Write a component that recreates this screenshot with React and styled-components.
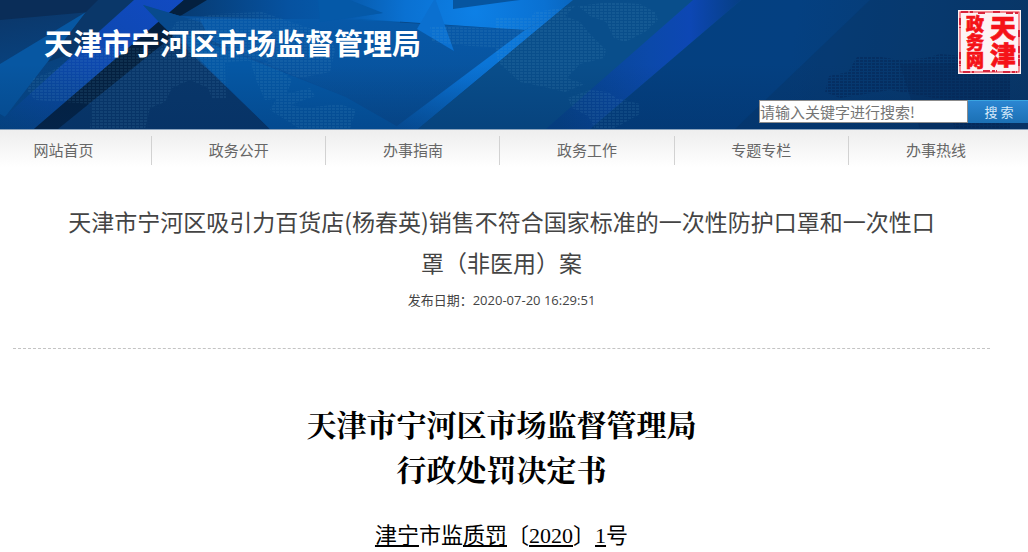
import React from 'react';
import styled, { createGlobalStyle, css } from 'styled-components';

const GlobalStyle = createGlobalStyle`
    * {
        box-sizing: border-box;
    }
    body {
        margin: 0;
        background: #fff;
        color: #444;
        font-family: 'Open Sans', 'Noto Sans CJK SC', sans-serif;
    }
`;

const Header = styled.header`
    position: relative;
    display: flex;
    justify-content: space-between;
    overflow: hidden;
    background: #064a8c;
`;

const BannerArt = styled.svg`
    position: absolute;
    inset: 0;
    width: 100%;
    height: 100%;
`;

const SiteName = styled.h1`
    position: relative;
    margin: 0;
    padding: 20px 0 0 44px;
    color: #fff;
    font: bold 29px/44px 'Noto Sans CJK SC', sans-serif;
`;

const HeaderSide = styled.div`
    position: relative;
    display: flex;
    flex-direction: column;
    align-items: flex-end;
    gap: 26px;
    padding: 10px 0 6px;
`;

const SealLink = styled.a`
    display: block;
    height: 64px;
    margin-right: 7px;
`;

const SearchForm = styled.form`
    display: flex;
    height: 23px;
`;

const SearchInput = styled.input`
    width: 209px;
    padding: 0;
    border: 1px solid #8c8c8c;
    border-radius: 0;
    background: #fff;
    outline: none;
    font: 15px/21px 'Noto Sans CJK SC', sans-serif;
    &::placeholder {
        color: #757575;
        opacity: 1;
    }
`;

const SearchButton = styled.button`
    width: 60px;
    padding: 0 0 0 2px;
    border: 0;
    border-top: 1px solid #3aa5e0;
    background: linear-gradient(#2c86d2, #1b70b4);
    color: #d5e9fa;
    font: 13px/20px 'Noto Sans CJK SC', sans-serif;
`;

const Nav = styled.nav`
    display: grid;
    grid-template-columns: 152fr repeat(5, 174fr);
    padding: 6px 5px 2px 0;
    border-top: 1px solid #8ba3bd;
    background: linear-gradient(#eee, #fff);
`;

const NavLink = styled.a`
    border-right: 1px solid #d2d2d2;
    color: #666;
    font: 15px/28px 'Noto Sans CJK SC', sans-serif;
    padding-bottom: 1px;
    text-align: center;
    text-decoration: none;
    ${(props) =>
        props.$first &&
        css`
            padding-right: 24px;
        `}
    &:last-child {
        border-right: 0;
    }
`;

const Article = styled.article`
    margin: 0 38px 0 13px;
    text-align: center;
`;

const ArticleHead = styled.div`
    padding: 34px 50px 38px;
    border-bottom: 1px dashed #c4c4c4;
`;

const ArticleTitle = styled.h2`
    margin: 0 0 7px;
    font: 23px/41px 'Noto Sans CJK SC', sans-serif;
`;

const PublishDate = styled.p`
    margin: 0;
    font-size: 13px;
    line-height: 20px;
`;

const Decision = styled.section`
    padding-top: 54px;
    color: #000;
    font-family: 'Liberation Serif', 'Noto Serif CJK SC', 'Noto Sans CJK SC', serif;
`;

const DecisionTitle = styled.h3`
    margin: 0 0 28px;
    font-size: 30px;
    line-height: 45px;
`;

const CaseNumber = styled.p`
    margin: 0;
    font-family: 'Liberation Serif', 'Noto Sans CJK SC', serif;
    font-size: 22px;
    line-height: 30px;
`;

const links = ['网站首页', '政务公开', '办事指南', '政务工作', '专题专栏', '办事热线'];

function Banner() {
    return (
        <BannerArt viewBox="0 0 1028 129" preserveAspectRatio="none" aria-hidden="true">
            <defs>
                <linearGradient id="left" gradientUnits="userSpaceOnUse" x1="40" y1="0" x2="60" y2="110">
                    <stop offset="0" stopColor="#0b3668" />
                    <stop offset="1" stopColor="#064b8f" />
                </linearGradient>
                <linearGradient id="band" x1="1" y1="0" x2="0" y2="1">
                    <stop offset="0" stopColor="#114ac2" />
                    <stop offset="0.5" stopColor="#0d48ad" />
                    <stop offset="1" stopColor="#064a8c" />
                </linearGradient>
                <linearGradient id="bandRight" gradientUnits="userSpaceOnUse" x1="560" y1="0" x2="740" y2="0">
                    <stop offset="0" stopColor="#07458c" />
                    <stop offset="0.5" stopColor="#0b49aa" />
                    <stop offset="0.72" stopColor="#0d47b4" />
                    <stop offset="1" stopColor="#063f85" />
                </linearGradient>
                <linearGradient id="top">
                    <stop offset="0" stopColor="#073a70" />
                    <stop offset="0.5" stopColor="#0652a0" />
                    <stop offset="1" stopColor="#0561b5" />
                </linearGradient>
                <linearGradient id="middle" x2="0" y2="1">
                    <stop offset="0" stopColor="#0759a9" />
                    <stop offset="1" stopColor="#084e94" />
                </linearGradient>
                <radialGradient id="glow" gradientUnits="userSpaceOnUse" cx="475" cy="12" r="140">
                    <stop offset="0" stopColor="#0d80e6" />
                    <stop offset="0.5" stopColor="#0a71d2" />
                    <stop offset="1" stopColor="#0756a4" />
                </radialGradient>
                <linearGradient id="right" gradientUnits="userSpaceOnUse" x1="640" y1="0" x2="1028" y2="60">
                    <stop offset="0" stopColor="#044080" />
                    <stop offset="0.4" stopColor="#044081" />
                    <stop offset="1" stopColor="#0a386a" />
                </linearGradient>
                <linearGradient id="shade" x2="0" y2="1">
                    <stop offset="0.5" stopColor="#022a5e" stopOpacity="0" />
                    <stop offset="1" stopColor="#022a5e" stopOpacity="0.3" />
                </linearGradient>
                <pattern id="dots" width="4" height="3" patternUnits="userSpaceOnUse">
                    <rect width="3" height="2" fill="#6cb0d4" />
                </pattern>
                <pattern id="darkDots" width="4" height="3" patternUnits="userSpaceOnUse">
                    <rect width="3" height="2" fill="#031f4d" />
                </pattern>
            </defs>

            <rect width="1028" height="129" fill="url(#left)" />
            <path d="M0 0H122L90 12L0 20Z" fill="#0a2d58" />
            <path d="M0 64L86 12L5 117L0 114Z" fill="#0757a2" />
            <path d="M86 12L98 0H134L75 52L48 62Z" fill="#0a3769" />
            <path d="M134 0H184L34 129H0V121Z" fill="url(#band)" />
            <path d="M184 0H400V129H34Z" fill="#09376a" />
            <path d="M184 0H217L58 129H34Z" fill="#04203f" />
            <path d="M207 0H400V30L176 17L182 15Z" fill="url(#top)" />
            <path d="M143 5L180 16L400 22L402 129H270L160 23Z" fill="#08509a" />
            <path d="M143 5L180 16L200 22L225 48L205 67L160 23Z" fill="#084a8d" />
            <path d="M200 60L176 30L346 97L402 129H270Z" fill="#0558a5" />
            <path d="M200 19L340 19L525 30L402 129L346 97L210 40Z" fill="url(#middle)" />
            <path d="M320 0H575L525 30L361 19L340 20L383 13Z" fill="url(#glow)" />
            <path d="M318 0H350L383 13L320 22Z" fill="#0559a8" />
            <path d="M453 0H520L453 9Z" fill="#0655a0" />
            <path d="M435 -2L417 29L454 51Z" fill="#0b70d0" />
            <path d="M573 0L525 30L393 129H418L573 0Z" fill="url(#glow)" />
            <path d="M573 0H694L546 129H418Z" fill="#094e8b" />
            <path d="M741 0H1028V129H590Z" fill="url(#right)" />
            <path d="M693 0H741L590 129H546Z" fill="url(#bandRight)" />
            <path d="M870 0H1028V129H735Z" fill="#083565" opacity="0.4" />
            <rect width="1028" height="129" fill="url(#shade)" />

            <g fill="url(#dots)" opacity="0.11">
                <path d="M27 90L34 78L50 72L70 60L110 45L160 50L176 22L215 14L262 12L300 25L330 35L335 50L330 72L300 78L290 75L265 60L225 62L226 98L212 98L208 88L190 80L172 88L165 102L150 108L145 129H90L92 104L35 100Z" />
                <path d="M250 60L275 65L292 80L285 98L265 100L256 80Z" />
                <path d="M278 96L310 88L315 96L290 105L305 108L340 104L356 110L352 122L350 129H300L270 110Z" />
                <path d="M430 26L520 30L512 48L470 46L432 42Z" />
                <path d="M495 18L530 18L535 12L575 6L565 16L580 22L590 34L606 50L604 58L580 64L567 78L585 84L565 92L540 86L520 82L498 62L495 45Z" />
                <path d="M578 6L610 2L640 4L655 12L658 20L645 32L625 42L614 38L606 22L590 16Z" />
                <path d="M568 98L590 90L608 92L616 98L640 104L640 114L622 124L612 129H595L588 116L572 108Z" />
            </g>
            <path
                d="M825 92L829 76L848 72L857 57L875 56L900 60L925 58L940 54L1010 60V129H955L945 100L890 90L840 98Z"
                fill="url(#darkDots)"
                opacity="0.4"
            />
            <path d="M900 64L1010 62V129H920Z" fill="#062755" opacity="0.35" />
        </BannerArt>
    );
}

function Seal() {
    return (
        <svg width="63" height="64" viewBox="0 0 63 64" role="img" aria-label="天津政务网">
            <rect width="63" height="64" fill="#fdf3f5" />
            <rect x="2" y="2" width="59" height="60" fill="none" stroke="#ee2634" />
            <path
                d="M3 2H15M20 3H29M35 2H43M48 3H60M2 8V18M61 20V29M61 36V58M2 42V56M5 62H16M25 61H39M45 62H59"
                stroke="#d8253c"
                strokeWidth="2"
                strokeDasharray="7 2 3 1"
            />
            <g
                fill="#f51218"
                stroke="#f51218"
                strokeWidth="0.6"
                fontFamily="'Noto Sans CJK SC', sans-serif"
                fontWeight="900"
                textAnchor="middle"
            >
                <text fontSize="18" x="17" y="21">政</text>
                <text fontSize="18" x="17" y="39">务</text>
                <text fontSize="18" x="17" y="57">网</text>
                <text fontSize="26" x="45" y="28">天</text>
                <text fontSize="26" x="45" y="55">津</text>
            </g>
        </svg>
    );
}

export default function App() {
    return (
        <>
            <GlobalStyle />
            <Header>
                <Banner />
                <SiteName>天津市宁河区市场监督管理局</SiteName>
                <HeaderSide>
                    <SealLink href="#">
                        <Seal />
                    </SealLink>
                    <SearchForm onSubmit={(e) => e.preventDefault()}>
                        <SearchInput
                            type="text"
                            aria-label="请输入关键字进行搜索"
                            placeholder="请输入关键字进行搜索!"
                        />
                        <SearchButton type="submit">搜 索</SearchButton>
                    </SearchForm>
                </HeaderSide>
            </Header>
            <Nav>
                {links.map((name, index) => (
                    <NavLink key={name} href="#" $first={index === 0}>
                        {name}
                    </NavLink>
                ))}
            </Nav>
            <Article>
                <ArticleHead>
                    <ArticleTitle>
                        天津市宁河区吸引力百货店(杨春英)销售不符合国家标准的一次性防护口罩和一次性口罩（非医用）案
                    </ArticleTitle>
                    <PublishDate>发布日期：2020-07-20 16:29:51</PublishDate>
                </ArticleHead>
                <Decision>
                    <DecisionTitle>
                        天津市宁河区市场监督管理局
                        <br />
                        行政处罚决定书
                    </DecisionTitle>
                    <CaseNumber>
                        <u>津宁</u>市监<u>质罚</u>〔<u>2020</u>〕<u>1</u>号
                    </CaseNumber>
                </Decision>
            </Article>
        </>
    );
}
